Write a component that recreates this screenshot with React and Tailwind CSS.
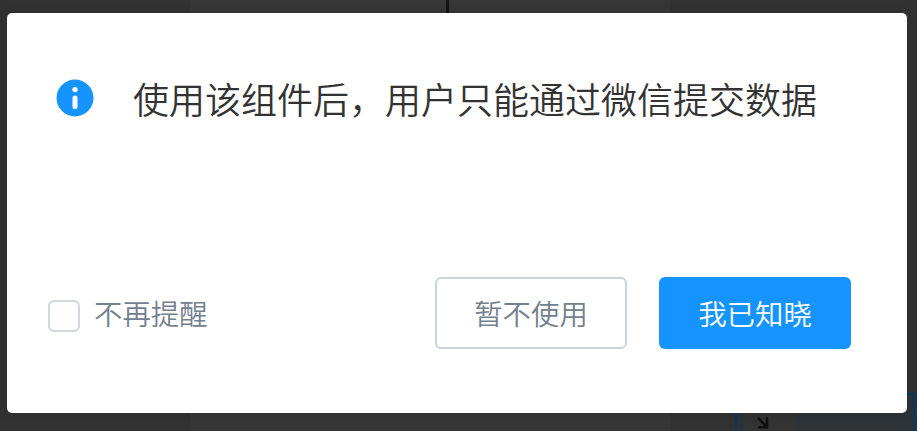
import { useState } from 'react';

const FONT = "font-['Noto_Sans_CJK_SC',sans-serif]";

export default function App() {
  const [remember, setRemember] = useState(false);

  return (
    <div className={`relative w-[917px] h-[431px] overflow-hidden bg-[#323232] ${FONT}`}>
      <EditorBackdrop />

      {/* DIALOG */}
      <div className="relative ml-[7px] pt-[13px] w-[900px]">
        <div
          role="dialog"
          className="flex flex-col justify-between h-[400px] rounded-[5px] bg-white pl-[41px] pr-14 pt-[58px] pb-16 shadow-[0_2px_12px_rgba(0,0,0,0.1)]"
        >
          <div className="flex items-start">
            <InfoIcon />
            <p className="ml-[39px] text-[36px] leading-[54px] font-[350] text-[#333333] whitespace-nowrap">
              使用该组件后，用户只能通过微信提交数据
            </p>
          </div>

          <div className="flex items-center">
            <label className="flex items-center mt-1.5 cursor-pointer">
              <input
                type="checkbox"
                checked={remember}
                onChange={(e) => setRemember(e.target.checked)}
                className="appearance-none w-8 h-8 border-2 border-[#cfd8de] rounded-[6px] bg-white checked:bg-[#1593ff]"
              />
              <span className="ml-[14px] -mt-1.5 text-[28.4px] leading-10 font-[350] text-[#73808f]">
                不再提醒
              </span>
            </label>

            <div className="flex gap-8 ml-auto">
              <button className="w-48 h-[72px] border-2 border-[#cad4de] rounded-[6px] bg-white text-[28.4px] font-[350] text-[#73808f]">
                暂不使用
              </button>
              <button className="w-48 h-[72px] rounded-[6px] bg-[#1593ff] text-[28.4px] font-[350] text-white">
                我已知晓
              </button>
            </div>
          </div>
        </div>
      </div>
    </div>
  );
}

/* Dimmed form editor behind the dialog */
function EditorBackdrop() {
  return (
    <div className="absolute inset-0 flex">
      <div className="w-[190px] bg-[#323232]" />
      <div className="w-[480px] bg-[#363636] pl-[256px]">
        <div className="w-[3px] h-5 bg-[#141414]" />
      </div>
      <div className="flex-1 bg-[#323233] pl-[65px] pt-[393px]">
        <div className="w-[180px] h-20 border-2 border-[#063a66] bg-[#2d3337] pl-2">
          <div className="w-[52px] h-full bg-[#333333] pl-[12px] pt-[22px]">
            <svg width="12" height="12" viewBox="0 0 12 12" fill="none" stroke="#111111" strokeWidth="2.5">
              <path d="M1 1l9 9M10 0.6v9.6H1" />
            </svg>
          </div>
        </div>
      </div>
    </div>
  );
}

function InfoIcon() {
  return (
    <svg className="mt-2 ml-2 shrink-0" width="38" height="38" viewBox="0 0 38 38">
      <circle cx="19" cy="19" r="18.5" fill="#1593ff" />
      <circle cx="19" cy="10.6" r="2.7" fill="#ffffff" />
      <rect x="16.5" y="16.6" width="5" height="13.6" rx="2.5" fill="#ffffff" />
    </svg>
  );
}
